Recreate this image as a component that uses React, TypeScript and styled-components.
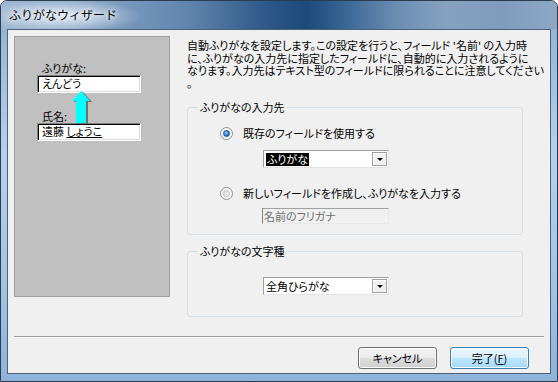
import React from 'react';
import styled, { createGlobalStyle } from 'styled-components';

const GlobalStyle = createGlobalStyle`
  body {
    margin: 0;
    background: #ffffff;
    font-family: 'Noto Sans CJK JP', 'Noto Sans', sans-serif;
  }
`;

const DESCRIPTION = [
  '自動ふりがなを設定します。この設定を行うと、フィールド \'名前\' の入力時',
  'に、ふりがなの入力先に指定したフィールドに、自動的に入力されるように',
  'なります。入力先はテキスト型のフィールドに限られることに注意してください',
  '。',
];

const App = () => {
  return (
    <>
      <GlobalStyle />
      <WindowStyle>
        <TitleBarStyle>
          <TitleStyle>ふりがなウィザード</TitleStyle>
        </TitleBarStyle>
        <ClientStyle>
          <TopRowStyle>
            <PreviewPanelStyle>
              <PanelLabelStyle>ふりがな:</PanelLabelStyle>
              <PanelInputStyle>えんどう</PanelInputStyle>
              <PanelLabelStyle $gap={17}>氏名:</PanelLabelStyle>
              <PanelInputStyle>
                遠藤 <ImeTextStyle>しょうこ</ImeTextStyle>
              </PanelInputStyle>
              <ArrowStyle width="21" height="33" viewBox="0 0 21 33">
                <polygon points="11,1 20,11 16,11 16,33 6,33 6,11 2,11" fill="#6f6f6f" />
                <polygon points="9,0 18,10 14,10 14,32 4,32 4,10 0,10" fill="#00ffff" />
              </ArrowStyle>
            </PreviewPanelStyle>

            <RightColumnStyle>
              <DescriptionStyle>
                {DESCRIPTION.map((line) => (
                  <LineStyle key={line}>{line}</LineStyle>
                ))}
              </DescriptionStyle>

              <GroupStyle $height={134}>
                <LegendStyle>ふりがなの入力先</LegendStyle>
                <OptionRowStyle $top={13}>
                  <RadioStyle $checked />
                  <span>既存のフィールドを使用する</span>
                </OptionRowStyle>
                <ComboStyle $top={10}>
                  <ComboValueStyle>
                    <SelectedTextStyle>ふりがな</SelectedTextStyle>
                  </ComboValueStyle>
                  <DropButtonStyle>
                    <TriangleStyle />
                  </DropButtonStyle>
                </ComboStyle>
                <OptionRowStyle $top={19}>
                  <RadioStyle />
                  <span>新しいフィールドを作成し、ふりがなを入力する</span>
                </OptionRowStyle>
                <DisabledInputStyle>名前のフリガナ</DisabledInputStyle>
              </GroupStyle>

              <GroupStyle $height={72} $spaced>
                <LegendStyle>ふりがなの文字種</LegendStyle>
                <ComboStyle $top={19}>
                  <ComboValueStyle>全角ひらがな</ComboValueStyle>
                  <DropButtonStyle>
                    <TriangleStyle />
                  </DropButtonStyle>
                </ComboStyle>
              </GroupStyle>
            </RightColumnStyle>
          </TopRowStyle>

          <SeparatorStyle />

          <FooterStyle>
            <ButtonStyle>キャンセル</ButtonStyle>
            <ButtonStyle $primary>
              完了(<u>F</u>)
            </ButtonStyle>
          </FooterStyle>
        </ClientStyle>
      </WindowStyle>
    </>
  );
};

export default App;

const WindowStyle = styled.div`
  width: 558px;
  height: 382px;
  box-sizing: border-box;
  display: flex;
  flex-direction: column;
  border: 1px solid #2b3c50;
  border-radius: 7px 7px 0 0;
  overflow: hidden;
  background: linear-gradient(180deg, #8fb0d4 0%, #b4d0ec 40%, #a3c3e6 75%, #8fb2da 100%);
`;

const TitleBarStyle = styled.div`
  height: 28px;
  flex-shrink: 0;
  display: flex;
  align-items: center;
  padding-left: 8px;
  background:
    radial-gradient(ellipse 78px 17px at 62px 15px, rgba(232, 240, 248, 0.9), rgba(232, 240, 248, 0) 100%),
    linear-gradient(90deg, #9fb8d3 0%, #8aa7c7 14%, #5f84ad 34%, #2c5787 48%, #1d497b 55%, #3a6695 62%, #6b8db2 71%, #86a2c1 80%, #7f9cbd 90%, #8ea8c5 100%);
`;

const TitleStyle = styled.span`
  font-size: 12px;
  line-height: 14px;
  color: #000000;
  text-shadow: 0 0 4px #ffffff, 0 0 8px #ffffff;
`;

const ClientStyle = styled.div`
  flex: 1;
  margin: 0 6px 7px;
  display: flex;
  flex-direction: column;
  padding: 6px 6px 0;
  background: #f0f0f0;
  border: 1px solid #4d6178;
  font-size: 11px;
  line-height: 13px;
  color: #000000;
  font-feature-settings: 'palt';
`;

const TopRowStyle = styled.div`
  height: 300px;
  display: flex;
  align-items: flex-start;
`;

const PreviewPanelStyle = styled.div`
  position: relative;
  width: 156px;
  height: 261px;
  box-sizing: border-box;
  display: flex;
  flex-direction: column;
  align-items: flex-start;
  padding: 25px 0 0 22px;
  background: #c0c0c0;
  border: 1px solid #a0a0a0;
`;

const PanelLabelStyle = styled.span<{ $gap?: number }>`
  margin: ${({ $gap }) => $gap ?? 0}px 0 0 5px;
  line-height: 13px;
`;

const PanelInputStyle = styled.div`
  width: 104px;
  height: 18px;
  box-sizing: border-box;
  padding-left: 4px;
  line-height: 15px;
  background: #ffffff;
  border-top: 1px solid #808080;
  border-left: 1px solid #808080;
  border-bottom: 1px solid #ffffff;
  border-right: 1px solid #ffffff;
  box-shadow: inset 1px 1px 0 #000000, inset -1px -1px 0 #dfdfdf;
`;

const ImeTextStyle = styled.span`
  text-decoration: underline;
  text-underline-offset: 1px;
`;

const ArrowStyle = styled.svg`
  position: absolute;
  left: 57px;
  top: 54px;
`;

const RightColumnStyle = styled.div`
  margin-left: 17px;
  width: 345px;
  display: flex;
  flex-direction: column;
  padding-top: 3px;
`;

const DescriptionStyle = styled.div`
  margin-bottom: 12px;
  line-height: 12.5px;
`;

const LineStyle = styled.span`
  display: block;
  white-space: nowrap;
`;

const GroupStyle = styled.fieldset<{ $height: number; $spaced?: boolean }>`
  width: 336px;
  height: ${({ $height }) => $height}px;
  box-sizing: border-box;
  margin: ${({ $spaced }) => ($spaced ? '10px' : '0')} 0 0;
  padding: 0 0 0 32px;
  border: 1px solid #d5dfe5;
  border-radius: 3px;
  display: flex;
  flex-direction: column;
  align-items: flex-start;
`;

const LegendStyle = styled.legend`
  margin-left: -22px;
  padding: 0 2px;
  line-height: 13px;
`;

const OptionRowStyle = styled.div<{ $top: number }>`
  display: flex;
  align-items: center;
  gap: 10px;
  height: 13px;
  margin-top: ${({ $top }) => $top}px;
`;

const RadioStyle = styled.span<{ $checked?: boolean }>`
  width: 13px;
  height: 13px;
  box-sizing: border-box;
  border-radius: 50%;
  border: 1px solid #8f8f8f;
  background: radial-gradient(circle at 50% 50%, #e9e9e9 0%, #f8f8f8 70%);
  display: flex;
  align-items: center;
  justify-content: center;

  &::after {
    content: '';
    width: 7px;
    height: 7px;
    box-sizing: border-box;
    border-radius: 50%;
    border: 1px solid ${({ $checked }) => ($checked ? '#1c4f86' : '#c4c4c4')};
    background: ${({ $checked }) =>
      $checked
        ? 'radial-gradient(circle at 40% 35%, #9fd4fb 0%, #3a8fd8 45%, #16599f 100%)'
        : 'linear-gradient(135deg, #d5d5d5 0%, #f4f4f4 100%)'};
  }
`;

const ComboStyle = styled.div<{ $top: number }>`
  width: 126px;
  height: 18px;
  box-sizing: border-box;
  margin: ${({ $top }) => $top}px 0 0 43px;
  padding: 1px;
  display: flex;
  align-items: stretch;
  background: #ffffff;
  border-top: 1px solid #a0a0a0;
  border-left: 1px solid #a0a0a0;
  border-bottom: 1px solid #e3e3e3;
  border-right: 1px solid #e3e3e3;
`;

const ComboValueStyle = styled.div`
  flex: 1;
  display: flex;
  align-items: center;
  padding-left: 1px;
`;

const SelectedTextStyle = styled.span`
  background: #000000;
  color: #ffffff;
  padding: 0 1px;
  line-height: 13px;
`;

const DropButtonStyle = styled.div`
  width: 15px;
  box-sizing: border-box;
  display: flex;
  align-items: center;
  justify-content: center;
  background: #f0f0f0;
  border: 1px solid #a0a0a0;
  box-shadow: inset 1px 1px 0 #ffffff;
`;

const TriangleStyle = styled.span`
  width: 0;
  height: 0;
  margin-top: 1px;
  border-left: 3px solid transparent;
  border-right: 3px solid transparent;
  border-top: 3px solid #000000;
`;

const DisabledInputStyle = styled.div`
  width: 127px;
  height: 16px;
  box-sizing: border-box;
  margin: 8px 0 0 42px;
  padding-left: 1px;
  line-height: 14px;
  color: #6d6d6d;
  background: #f0f0f0;
  border-top: 1px solid #a0a0a0;
  border-left: 1px solid #808080;
  border-bottom: 1px solid #e8e8e8;
  border-right: 1px solid #e8e8e8;
`;

const SeparatorStyle = styled.div`
  border-top: 1px solid #a0a0a0;
  border-bottom: 1px solid #ffffff;
`;

const FooterStyle = styled.div`
  display: flex;
  justify-content: flex-end;
  gap: 13px;
  padding: 9px 15px 0 0;
`;

const ButtonStyle = styled.button<{ $primary?: boolean }>`
  width: 79px;
  height: 22px;
  padding: 0;
  font-family: inherit;
  font-size: 11px;
  font-feature-settings: 'palt';
  color: #000000;
  border-radius: 3px;
  border: 1px solid ${({ $primary }) => ($primary ? '#3c7fb1' : '#707070')};
  box-shadow: inset 0 0 0 1px ${({ $primary }) => ($primary ? '#f0faff' : '#fbfbfb')};
  background: ${({ $primary }) =>
    $primary
      ? 'linear-gradient(180deg, #eaf6fd 0%, #d9f0fc 50%, #bee6fd 50%, #a7d9f5 100%)'
      : 'linear-gradient(180deg, #f2f2f2 0%, #ebebeb 50%, #dddddd 50%, #cfcfcf 100%)'};

  u {
    text-underline-offset: 1px;
  }
`;
